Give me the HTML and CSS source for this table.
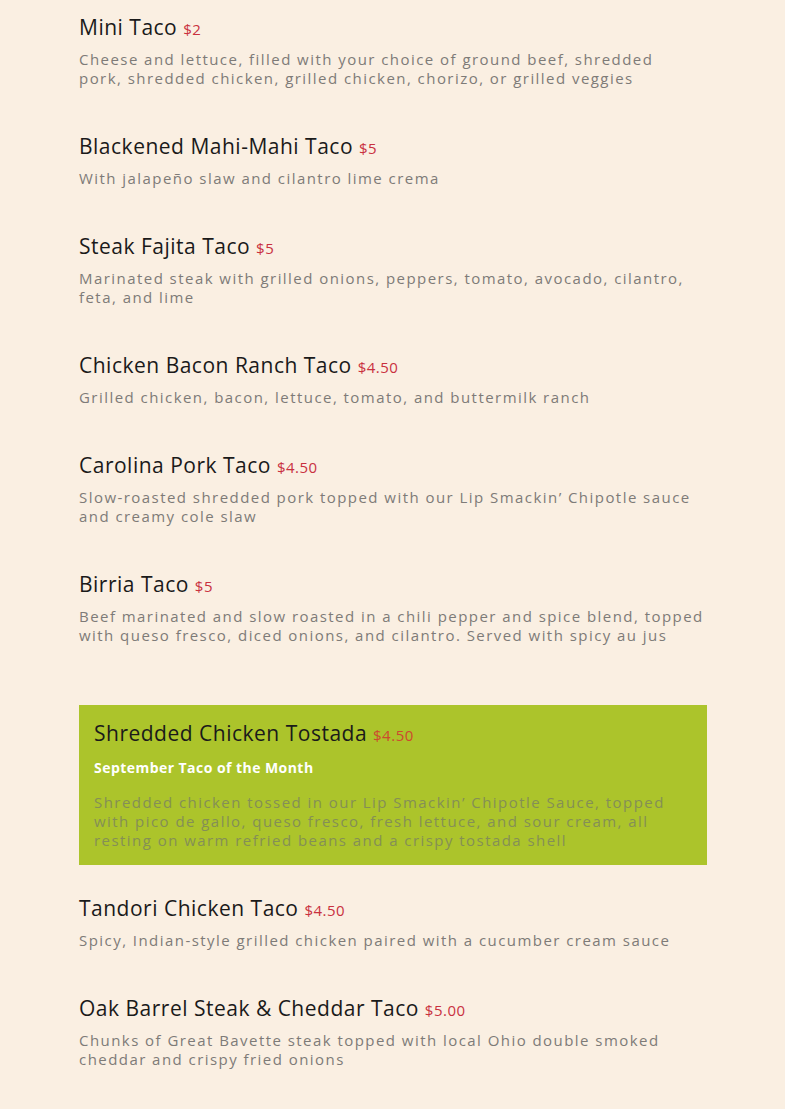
FILE: index.html
```html
<!DOCTYPE html>
<html lang="en">
<head>
<meta charset="utf-8">
<title>Tacos</title>
<link rel="stylesheet" href="styles.css">
</head>
<body>
<main class="menu">
  <section class="item">
    <h3 class="item-title">Mini Taco <span class="price">$2</span></h3>
    <p class="desc">Cheese and lettuce, filled with your choice of ground beef, shredded pork,&nbsp;shredded chicken, grilled chicken, chorizo, or grilled veggies</p>
  </section>
  <section class="item">
    <h3 class="item-title">Blackened Mahi-Mahi Taco <span class="price">$5</span></h3>
    <p class="desc">With jalapeño slaw and cilantro lime crema</p>
  </section>
  <section class="item">
    <h3 class="item-title">Steak Fajita Taco <span class="price">$5</span></h3>
    <p class="desc">Marinated steak with grilled onions, peppers, tomato, avocado, cilantro, feta, and lime</p>
  </section>
  <section class="item">
    <h3 class="item-title">Chicken Bacon Ranch Taco <span class="price">$4.50</span></h3>
    <p class="desc">Grilled chicken, bacon, lettuce, tomato, and buttermilk ranch</p>
  </section>
  <section class="item">
    <h3 class="item-title">Carolina Pork Taco <span class="price">$4.50</span></h3>
    <p class="desc">Slow-roasted shredded pork topped with our Lip Smackin’ Chipotle sauce and creamy cole slaw</p>
  </section>
  <section class="item">
    <h3 class="item-title">Birria Taco <span class="price">$5</span></h3>
    <p class="desc">Beef marinated and slow roasted in a chili pepper and spice blend, topped with queso fresco, diced onions, and cilantro. Served with spicy au jus</p>
  </section>
  <section class="item featured">
    <h3 class="item-title">Shredded Chicken Tostada <span class="price">$4.50</span></h3>
    <p class="feature-label">September Taco of the Month</p>
    <p class="desc">Shredded chicken tossed in our Lip Smackin’ Chipotle Sauce, topped with pico de gallo, queso fresco, fresh lettuce, and sour cream, all resting on warm refried beans and a crispy tostada shell</p>
  </section>
  <section class="item">
    <h3 class="item-title">Tandori Chicken Taco <span class="price">$4.50</span></h3>
    <p class="desc">Spicy, Indian-style grilled chicken paired with a cucumber cream sauce</p>
  </section>
  <section class="item">
    <h3 class="item-title">Oak Barrel Steak &amp; Cheddar Taco <span class="price">$5.00</span></h3>
    <p class="desc">Chunks of Great Bavette steak topped with local Ohio double smoked cheddar and crispy fried onions</p>
  </section>
</main>
</body>
</html>
```

FILE: styles.css
```css
html, body {
  margin: 0;
  padding: 0;
  background: #faefe2;
}

body {
  font-family: "Open Sans", "Liberation Sans", sans-serif;
}

.menu {
  width: 628px;
  margin: 0 0 0 79px;
  padding-top: 15px;
  display: flex;
  flex-direction: column;
  gap: 46px;
}

.item {
  display: flex;
  flex-direction: column;
}

.item-title {
  margin: 0;
  font-size: 21px;
  line-height: 24px;
  font-weight: 500;
  color: #1a1a1a;
  letter-spacing: 0.5px;
}

.price {
  font-size: 15px;
  font-weight: 400;
  color: #c9313f;
  letter-spacing: 0.5px;
}

.desc {
  margin: 9px 0 0;
  font-size: 15px;
  line-height: 19px;
  color: #7e7b78;
  letter-spacing: 1.45px;
}

.featured {
  background: #acc42b;
  padding: 16px 15px 15px;
  margin: 14px 0 -15px;
}

.featured .price {
  color: #cc4a2e;
}

.feature-label {
  margin: 11px 0 0;
  font-size: 14px;
  line-height: 20px;
  font-weight: 700;
  color: #ffffff;
  letter-spacing: 0.45px;
}

.featured .desc {
  margin-top: 15px;
  color: #848f56;
}
```
